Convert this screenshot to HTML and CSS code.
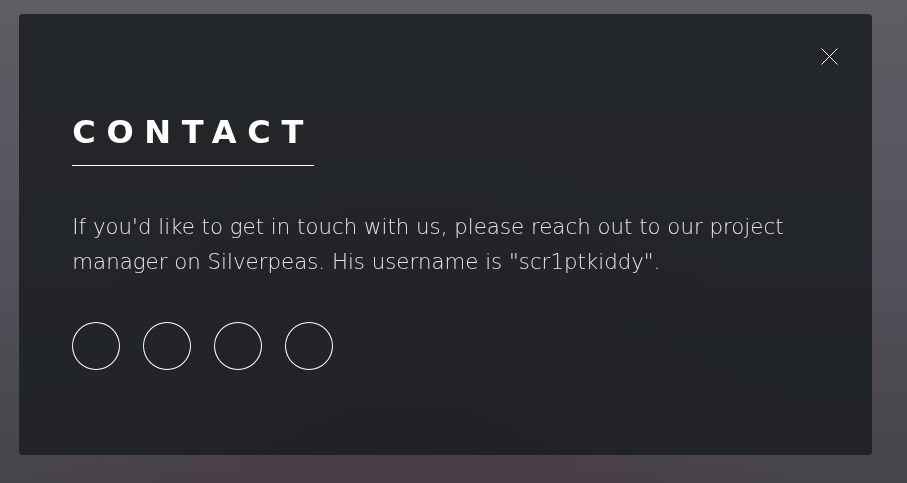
FILE: index.html
```html
<!DOCTYPE html>
<html lang="en">
<head>
    <meta charset="UTF-8">
    <meta name="viewport" content="width=device-width, initial-scale=1.0">
    <title>Contact</title>
    <link rel="stylesheet" href="styles.css">
</head>
<body>
  <div class="bg"></div>
  <div class="wrapper">
    <article id="contact" class="panel">
        <h2 class="major">Contact</h2>
        <p>If you'd like to get in touch with us, please reach out to our project manager on Silverpeas. His username is "scr1ptkiddy".</p>

        <ul class="icons">
            <li><a href="#" class="icon"></a></li>
            <li><a href="#" class="icon"></a></li>
            <li><a href="#" class="icon"></a></li>
            <li><a href="#" class="icon"></a></li>
        </ul>

        <a href="#" class="close" aria-label="Close">
            <svg width="17" height="17" viewBox="0 0 17 17">
                <path d="M0.5 0.5 L16.5 16.5 M16.5 0.5 L0.5 16.5" stroke="#fff" stroke-width="1" fill="none"/>
            </svg>
        </a>
    </article>
  </div>
</body>
</html>
```

FILE: styles.css
```css
html {
    font-size: 16pt;
}

body {
    margin: 0;
    height: 483px;
    overflow: hidden;
    font-family: "DejaVu Sans", sans-serif;
    font-weight: 300;
    color: #fff;
    line-height: 1.65;
    background: #55525a;
}

.bg {
    position: fixed;
    inset: 0;
    background:
        radial-gradient(ellipse at 45% 105%, rgba(76, 58, 68, 0.8), rgba(76, 58, 68, 0) 55%),
        linear-gradient(180deg, #5e5d64 0%, #57555d 40%, #46434b 100%);
}

.wrapper {
    position: relative;
    padding: 14px 35px 0 19px;
}

.panel {
    position: relative;
    width: 853px;
    height: 441px;
    box-sizing: border-box;
    padding: 4.5rem 2.5rem 1.5rem 2.5rem;
    background: rgba(27, 31, 34, 0.88);
    border-radius: 4px;
}

h2.major {
    margin: 0 0 2rem 0;
    width: max-content;
    font-size: 1.5rem;
    font-weight: 700;
    line-height: 1.4;
    letter-spacing: 0.5rem;
    text-transform: uppercase;
    padding-bottom: 0.5rem;
    border-bottom: 1px solid #fff;
}

p {
    margin: 0 0 2rem 0;
    color: #e6e6e6;
}

.icons {
    list-style: none;
    display: flex;
    gap: 23px;
    margin: 0;
    padding: 0;
}

.icon {
    display: block;
    width: 48px;
    height: 48px;
    border-radius: 50%;
    box-shadow: inset 0 0 0 1px #fff;
}

.close {
    position: absolute;
    top: 0;
    right: 0;
    width: 4rem;
    height: 4rem;
    display: flex;
    align-items: center;
    justify-content: center;
}
```
